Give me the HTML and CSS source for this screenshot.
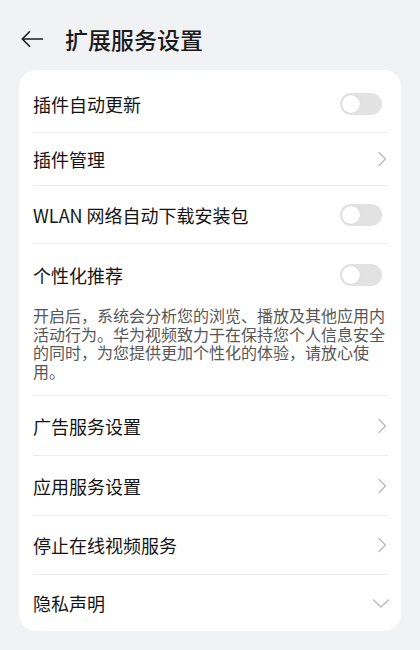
FILE: index.html
```html
<!DOCTYPE html>
<html lang="zh-CN">
<head>
<meta charset="utf-8">
<title>扩展服务设置</title>
<link rel="stylesheet" href="styles.css">
</head>
<body>
<div class="page">
  <header class="topbar">
    <svg class="back" width="24" height="18" viewBox="0 0 24 18" fill="none" stroke="#1b1b1b" stroke-width="1.6" stroke-linecap="round" stroke-linejoin="round">
      <path d="M22.5 9H2.5"/>
      <path d="M9.5 1.8L2.3 9l7.2 7.2"/>
    </svg>
    <h1 class="title">扩展服务设置</h1>
  </header>

  <section class="card">
    <div class="row row-first">
      <span class="label">插件自动更新</span>
      <span class="toggle"><span class="knob"></span></span>
    </div>
    <div class="row row-short">
      <span class="label">插件管理</span>
      <svg class="chev" width="10" height="16" viewBox="0 0 10 16" fill="none" stroke="#bdbdbd" stroke-width="1.5" stroke-linecap="round" stroke-linejoin="round"><path d="M2 1.5L8.5 8 2 14.5"/></svg>
    </div>
    <div class="row row-mid">
      <span class="label">WLAN 网络自动下载安装包</span>
      <span class="toggle"><span class="knob"></span></span>
    </div>
    <div class="group">
      <div class="row row-head">
        <span class="label">个性化推荐</span>
        <span class="toggle"><span class="knob"></span></span>
      </div>
      <p class="desc">开启后，系统会分析您的浏览、播放及其他应用内活动行为。华为视频致力于在保持您个人信息安全的同时，为您提供更加个性化的体验，请放心使用。</p>
    </div>
    <div class="row">
      <span class="label">广告服务设置</span>
      <svg class="chev" width="10" height="16" viewBox="0 0 10 16" fill="none" stroke="#bdbdbd" stroke-width="1.5" stroke-linecap="round" stroke-linejoin="round"><path d="M2 1.5L8.5 8 2 14.5"/></svg>
    </div>
    <div class="row">
      <span class="label">应用服务设置</span>
      <svg class="chev" width="10" height="16" viewBox="0 0 10 16" fill="none" stroke="#bdbdbd" stroke-width="1.5" stroke-linecap="round" stroke-linejoin="round"><path d="M2 1.5L8.5 8 2 14.5"/></svg>
    </div>
    <div class="row row-59">
      <span class="label">停止在线视频服务</span>
      <svg class="chev" width="10" height="16" viewBox="0 0 10 16" fill="none" stroke="#bdbdbd" stroke-width="1.5" stroke-linecap="round" stroke-linejoin="round"><path d="M2 1.5L8.5 8 2 14.5"/></svg>
    </div>
    <div class="row row-last">
      <span class="label">隐私声明</span>
      <svg class="chev-down" width="18" height="10" viewBox="0 0 18 10" fill="none" stroke="#bdbdbd" stroke-width="1.5" stroke-linecap="round" stroke-linejoin="round"><path d="M1.5 2l7.5 7 7.5-7"/></svg>
    </div>
  </section>
</div>
</body>
</html>
```

FILE: styles.css
```css
* {
  box-sizing: border-box;
}

html, body {
  margin: 0;
  padding: 0;
}

body {
  background: #f1f2f4;
  font-family: "Noto Sans CJK SC", "Noto Sans", sans-serif;
  color: #1b1b1b;
  width: 420px;
  height: 650px;
  overflow: hidden;
}

.page {
  padding: 0 19px;
}

.topbar {
  height: 70px;
  display: flex;
  align-items: center;
  padding-top: 7px;
  padding-left: 1px;
}

.back {
  display: block;
  flex: none;
}

.title {
  margin: 0 0 0 21px;
  font-size: 23px;
  font-weight: 500;
  line-height: 30px;
  letter-spacing: 0;
}

.card {
  background: #ffffff;
  border-radius: 17px;
  padding: 5px 13px 0 14px;
}

.row {
  height: 60px;
  display: flex;
  align-items: center;
  justify-content: space-between;
  border-bottom: 1px solid #ebebeb;
}

.row-first {
  height: 58px;
}

.row-short {
  height: 53px;
}

.row-mid {
  height: 58px;
}

.row-59 {
  height: 59px;
}

.row-last {
  height: 56px;
  border-bottom: none;
}

.label {
  font-size: 18px;
  line-height: 24px;
  font-weight: 400;
  color: #141414;
}

.group {
  border-bottom: 1px solid #ebebeb;
  padding-bottom: 15px;
}

.row-head {
  border-bottom: none;
  height: 62px;
}

.desc {
  margin: 0;
  font-size: 16px;
  line-height: 18.6px;
  color: #575757;
}

.toggle {
  width: 42px;
  height: 22px;
  border-radius: 11px;
  background: #e2e2e2;
  margin-right: 6px;
  position: relative;
  flex: none;
}

.knob {
  position: absolute;
  left: 2px;
  top: 2px;
  width: 18px;
  height: 18px;
  border-radius: 50%;
  background: #ffffff;
  box-shadow: 0 0 1px rgba(0, 0, 0, 0.15);
}

.chev {
  display: block;
  flex: none;
  margin-right: 1px;
}

.chev-down {
  display: block;
  flex: none;
  margin-right: -2px;
}
```
